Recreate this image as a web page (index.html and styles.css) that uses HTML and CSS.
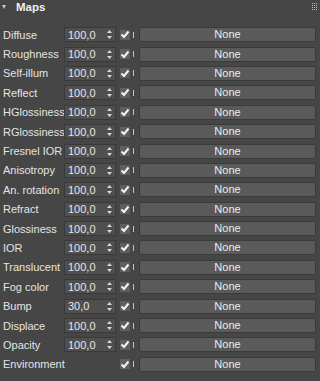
FILE: index.html
```html
<!DOCTYPE html>
<html lang="en">
<head>
    <meta charset="UTF-8">
    <title>Maps</title>
    <link rel="stylesheet" href="styles.css">
</head>
<body>
    <div class="rollout">
        <!-- Rollout header -->
        <div class="rollout-head">
            <span class="caret"></span>
            <span class="title">Maps</span>
            <svg class="grip" width="7" height="11" viewBox="0 0 7 11">
                <g fill="#bdbdbd">
                    <rect x="0" y="0" width="1" height="1"/><rect x="2" y="0" width="1" height="1"/><rect x="4" y="0" width="1" height="1"/>
                    <rect x="0" y="2" width="1" height="1"/><rect x="2" y="2" width="1" height="1"/><rect x="4" y="2" width="1" height="1"/>
                    <rect x="0" y="4" width="1" height="1"/><rect x="2" y="4" width="1" height="1"/><rect x="4" y="4" width="1" height="1"/>
                    <rect x="0" y="6" width="1" height="1"/><rect x="2" y="6" width="1" height="1"/><rect x="4" y="6" width="1" height="1"/>
                </g>
            </svg>
        </div>

        <!-- Map slots -->
        <div class="map-list" id="map-list"></div>
    </div>

    <script>
        const maps = [
            ['Diffuse', '100,0'], ['Roughness', '100,0'], ['Self-illum', '100,0'],
            ['Reflect', '100,0'], ['HGlossiness', '100,0'], ['RGlossiness', '100,0'],
            ['Fresnel IOR', '100,0'], ['Anisotropy', '100,0'], ['An. rotation', '100,0'],
            ['Refract', '100,0'], ['Glossiness', '100,0'], ['IOR', '100,0'],
            ['Translucent', '100,0'], ['Fog color', '100,0'], ['Bump', '30,0'],
            ['Displace', '100,0'], ['Opacity', '100,0'], ['Environment', null]
        ];

        const arrows = '<svg class="arrows" width="5" height="9" viewBox="0 0 5 9">' +
            '<path d="M2.5 0 L5 3 L0 3 Z M0 6 L5 6 L2.5 9 Z" fill="#d8d8d8"/></svg>';
        const check = '<svg width="10" height="9" viewBox="0 0 10 9">' +
            '<path d="M1.5 4.5 L4 7 L8.5 1.5" stroke="#f4f4f4" stroke-width="2" fill="none"/></svg>';

        const list = document.getElementById('map-list');
        maps.forEach(([name, amount]) => {
            const spinner = amount
                ? `<div class="spinner"><span>${amount}</span>${arrows}</div>`
                : '<div></div>';
            list.innerHTML += `<div class="map-row">
                <div class="label">${name}</div>
                ${spinner}
                <div class="check">${check}</div>
                <div class="tick"></div>
                <div class="slot">None</div>
            </div>`;
        });
    </script>
</body>
</html>
```

FILE: styles.css
```css
/* General */
body {
    margin: 0;
    background-color: #464646;
    font-family: 'Liberation Sans', Arial, sans-serif;
    font-size: 11px;
    color: #e2e2e2;
}

/* Rollout header */
.rollout-head {
    height: 25px;
    display: flex;
    align-items: flex-start;
    position: relative;
}
.caret {
    width: 0;
    height: 0;
    margin: 5px 0 0 2px;
    border-left: 2.5px solid transparent;
    border-right: 2.5px solid transparent;
    border-top: 4px solid #c8c8c8;
}
.title {
    margin: 1px 0 0 10px;
    font-weight: bold;
    font-size: 11.5px;
    color: #f0f0f0;
}
.grip {
    position: absolute;
    right: 1px;
    top: 3px;
}

/* Map rows: label | amount | toggle | tick | map button */
.map-row {
    height: 19.4px;
    display: grid;
    grid-template-columns: 61px 52px 14px 5px 1fr;
    align-items: center;
    padding: 0 4px 0 3px;
}
.label {
    white-space: nowrap;
    color: #e4e4e4;
}
.spinner {
    height: 15px;
    box-sizing: border-box;
    display: flex;
    align-items: center;
    justify-content: space-between;
    padding: 0 3px;
    background-color: #4f4f4f;
    border: 1px solid #393939;
    color: #e6e6e6;
}
.check {
    justify-self: end;
    width: 10px;
    height: 10px;
    background-color: #5e5e5e;
    display: flex;
    align-items: center;
    justify-content: center;
}
.check svg {
    display: block;
}
.tick {
    margin-left: 3px;
    width: 1px;
    height: 6px;
    background-color: #c4c4c4;
}
.slot {
    margin-left: 4px;
    height: 15px;
    box-sizing: border-box;
    background-color: #5a5a5a;
    border: 1px solid #3b3b3b;
    border-radius: 2px;
    text-align: center;
    line-height: 13px;
    color: #ececec;
}
```
